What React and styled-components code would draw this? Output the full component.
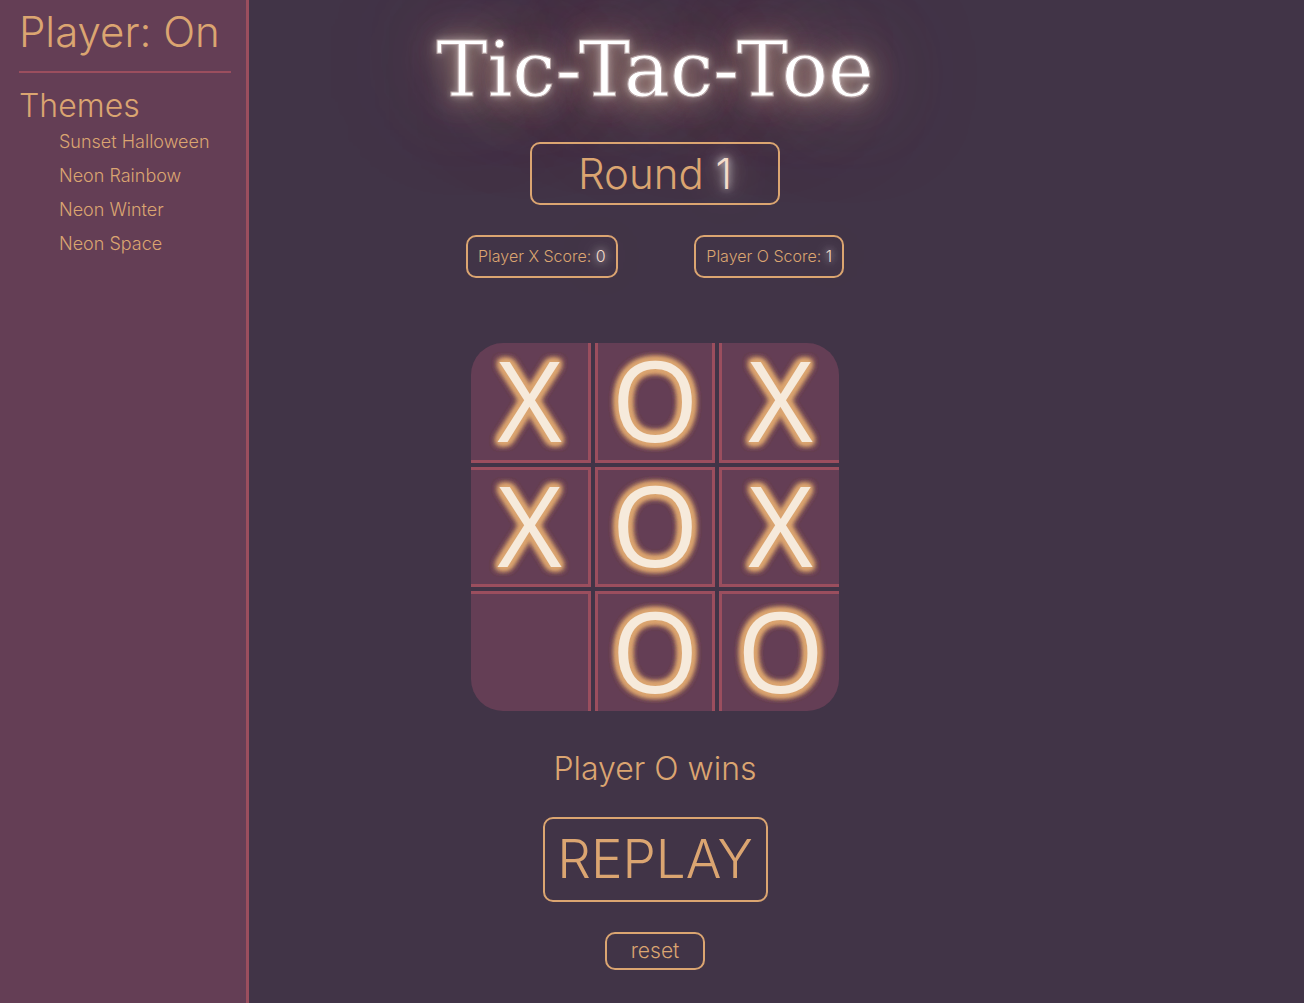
import React, { useState } from "react";
import styled, { createGlobalStyle } from "styled-components";

const color = {
  night: "#413447",
  plum: "#643e55",
  rose: "#9b4e5e",
  amber: "#dba571",
  cream: "#f6eadb",
};

const GlobalStyle = createGlobalStyle`
  *, *::before, *::after { box-sizing: border-box; }
  body {
    margin: 0;
    background: ${color.night};
    color: ${color.amber};
    font-family: Inter, "Open Sans", sans-serif;
    font-weight: 300;
  }
  button { font: inherit; color: inherit; cursor: pointer; }
`;

const Page = styled.div`
  display: grid;
  grid-template-columns: 249px minmax(0, 1fr) 243px;
  min-height: 100vh;
`;

const Sidebar = styled.aside`
  position: relative;
  z-index: 1;
  padding: 4px 15px 20px 19px;
  background: ${color.plum};
  border-right: 3px solid ${color.rose};
`;

const PlayerName = styled.h2`
  margin: 0;
  padding: 0 0 11px;
  border-bottom: 2px solid ${color.rose};
  font-size: 42px;
  line-height: 56px;
  font-weight: 300;
  white-space: nowrap;
`;

const ThemesTitle = styled.h3`
  margin: 14px 0 0;
  font-size: 32px;
  line-height: 38px;
  font-weight: 300;
`;

const ThemeList = styled.ul`
  margin: 0;
  padding: 0 0 0 40px;
  list-style: none;
`;

const ThemeButton = styled.button`
  display: block;
  padding: 0;
  border: 0;
  background: none;
  font-size: 18px;
  line-height: 34px;
  white-space: nowrap;
`;

const Game = styled.main`
  display: flex;
  flex-direction: column;
  align-items: center;
`;

const Title = styled.h1`
  margin: 0;
  padding-top: 22px;
  font-family: "DejaVu Serif", serif;
  font-size: 77px;
  line-height: 96px;
  font-weight: 300;
  white-space: nowrap;
  color: #fff;
  -webkit-text-stroke: 1px #b5a1a2;
  text-shadow:
    0 0 7px rgba(255, 255, 255, 0.4),
    0 0 14px rgba(246, 220, 200, 0.3),
    0 4px 30px rgba(225, 195, 160, 0.9),
    0 0 70px #a06a68,
    0 0 110px #8a4e60;
`;

const Round = styled.h2`
  margin: 24px 0 0;
  width: 250px;
  border: 2px solid ${color.amber};
  border-radius: 10px;
  font-size: 42px;
  line-height: 59px;
  font-weight: 300;
  text-align: center;
`;

const Glow = styled.span`
  color: #f3dccb;
  text-shadow:
    0 0 7px rgba(255, 255, 255, 0.6),
    0 0 12px rgba(255, 255, 255, 0.5),
    0 0 20px rgba(255, 255, 255, 0.6),
    0 0 42px ${color.amber};
`;

const Scores = styled.div`
  display: flex;
  justify-content: space-between;
  width: 378px;
  margin-top: 30px;
`;

const Score = styled.p`
  margin: 0;
  padding: 0 10px;
  border: 2px solid ${color.amber};
  border-radius: 10px;
  font-size: 16px;
  line-height: 39px;
  white-space: nowrap;
`;

const Board = styled.div`
  display: grid;
  grid-template-columns: repeat(3, 120px);
  grid-auto-rows: 120px;
  gap: 4px;
  margin-top: 65px;
  border-radius: 32px;
  overflow: hidden;
`;

const Cell = styled.button`
  display: flex;
  align-items: center;
  justify-content: center;
  padding: 0 0 6px;
  background: ${color.plum};
  border: 0 solid ${color.rose};
  border-top-width: ${(p) => (p.$row > 0 ? 3 : 0)}px;
  border-bottom-width: ${(p) => (p.$row < 2 ? 3 : 0)}px;
  border-left-width: ${(p) => (p.$col > 0 ? 3 : 0)}px;
  border-right-width: ${(p) => (p.$col < 2 ? 3 : 0)}px;
  font-family: "Open Sans", sans-serif;
  font-size: 112px;
  line-height: 112px;
  font-weight: 400;
  color: ${color.cream};
  text-shadow:
    0 0 2px ${color.amber}, 0 0 4px ${color.amber}, 0 0 4px ${color.amber},
    0 0 6px ${color.amber}, 0 0 6px ${color.amber}, 0 0 6px ${color.amber},
    0 0 8px ${color.amber}, 0 0 8px ${color.amber}, 0 0 8px ${color.amber},
    0 0 8px ${color.amber}, 0 0 8px ${color.amber}, 0 0 10px ${color.amber};
`;

const Result = styled.p`
  margin: 38px 0 0;
  font-size: 32px;
  line-height: 40px;
`;

const Action = styled.button`
  padding: 0;
  background: none;
  border: 2px solid ${color.amber};
  border-radius: 10px;
`;

const Replay = styled(Action)`
  width: 225px;
  margin-top: 28px;
  font-size: 53px;
  line-height: 81px;
`;

const Reset = styled(Action)`
  width: 100px;
  margin-top: 30px;
  font-size: 21px;
  line-height: 34px;
`;

const themes = ["Sunset Halloween", "Neon Rainbow", "Neon Winter", "Neon Space"];
const finished = ["X", "O", "X", "X", "O", "X", "", "O", "O"];

export default function App() {
  const [cells] = useState(finished);
  return (
    <>
      <GlobalStyle />
      <Page>
        <Sidebar>
          <PlayerName>Player: On</PlayerName>
          <ThemesTitle>Themes</ThemesTitle>
          <ThemeList>
            {themes.map((name) => (
              <li key={name}>
                <ThemeButton type="button">{name}</ThemeButton>
              </li>
            ))}
          </ThemeList>
        </Sidebar>
        <Game>
          <Title>Tic-Tac-Toe</Title>
          <Round>
            Round <Glow>1</Glow>
          </Round>
          <Scores>
            <Score>
              Player X Score: <Glow>0</Glow>
            </Score>
            <Score>
              Player O Score: <Glow>1</Glow>
            </Score>
          </Scores>
          <Board>
            {cells.map((mark, i) => (
              <Cell
                key={i}
                type="button"
                aria-label={mark || "Empty square"}
                $row={Math.floor(i / 3)}
                $col={i % 3}
              >
                {mark}
              </Cell>
            ))}
          </Board>
          <Result>Player O wins</Result>
          <Replay type="button">REPLAY</Replay>
          <Reset type="button">reset</Reset>
        </Game>
      </Page>
    </>
  );
}
